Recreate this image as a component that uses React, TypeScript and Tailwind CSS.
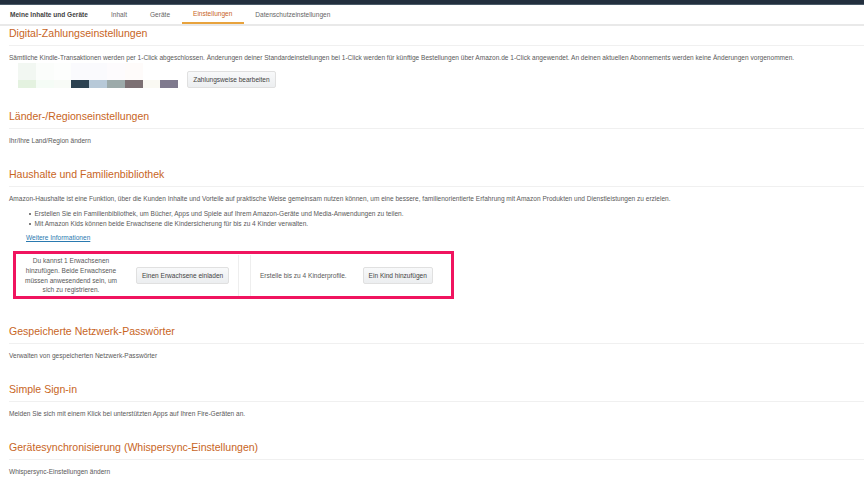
const font = { fontFamily: '"Liberation Sans", Arial, sans-serif' };

const tabs = ['Inhalt', 'Geräte', 'Einstellungen', 'Datenschutzeinstellungen'];

const swatches = [
  ['#f2f7f2', '#e4f2e0'],
  ['#fbfdfb', '#f5fcf6'],
  ['#fdfefd', '#f8fbf7'],
  ['#fafafd', '#2c4251'],
  ['#fafafd', '#b7c9d8'],
  ['#fdfbfd', '#9caaaa'],
  ['#fefbfa', '#7c7073'],
  ['#ffffff', '#faf9f3'],
  ['#ffffff', '#7f7a8e'],
];

function Section({ title, children }: { title: string; children?: React.ReactNode }) {
  return (
    <section>
      <h2 className="text-[10.55px] leading-[14px] text-[#c8651e] border-b border-[#f0f0f0] pb-[5px]">{title}</h2>
      {children}
    </section>
  );
}

function Btn({ children }: { children: React.ReactNode }) {
  return (
    <button className="h-[17px] px-[5px] text-[6.55px] text-[#444] rounded-[2px] border border-[#e0e0e0] bg-gradient-to-b from-[#f8f9fa] to-[#eceef0] whitespace-nowrap">
      {children}
    </button>
  );
}

export default function App() {
  return (
    <div style={font} className="relative w-[864px] h-[486px] overflow-hidden bg-white text-[6.55px] text-[#5a5a5a]">
      <div className="h-[5px] bg-[#232f3e] border-b border-[#4a5a68]" />
      <nav className="h-[19px] flex items-center border-b-2 border-[#e9e9e9] box-content">
        <span className="ml-[10px] w-[89.5px] font-bold text-[#444]">Meine Inhalte und Geräte</span>
        <div className="flex h-full">
          {tabs.map((t) => (
            <span
              key={t}
              className={
                t === 'Einstellungen'
                  ? 'flex items-center px-[11.5px] border-b-2 border-[#e8a33d] text-[#c8651e] h-[19px]'
                  : 'flex items-center px-[11.5px] h-[19px] text-[#666]'
              }
            >
              {t}
            </span>
          ))}
        </div>
      </nav>

      <main className="pl-[9px]">
        <Section title="Digital-Zahlungseinstellungen">
          <p className="mt-[7px] leading-[9px]">
            Sämtliche Kindle-Transaktionen werden per 1-Click abgeschlossen. Änderungen deiner Standardeinstellungen bei 1-Click werden für künftige Bestellungen über Amazon.de 1-Click angewendet. An deinen aktuellen Abonnements werden keine Änderungen vorgenommen.
          </p>
          <div className="mt-[1px] ml-[9px] flex items-end gap-[9px] h-[25px]">
            <div className="flex">
              {swatches.map((s, i) => (
                <div key={i} className="w-[17.8px]">
                  <div className="h-[17px]" style={{ background: s[0] }} />
                  <div className="h-[8px]" style={{ background: s[1] }} />
                </div>
              ))}
            </div>
            <Btn>Zahlungsweise bearbeiten</Btn>
          </div>
        </Section>

        <div className="mt-[21px]">
          <Section title="Länder-/Regionseinstellungen">
            <p className="mt-[7px] leading-[9px]">Ihr/Ihre Land/Region ändern</p>
          </Section>
        </div>

        <div className="mt-[22px]">
          <Section title="Haushalte und Familienbibliothek">
            <p className="mt-[7px] leading-[9px]">
              Amazon-Haushalte ist eine Funktion, über die Kunden Inhalte und Vorteile auf praktische Weise gemeinsam nutzen können, um eine bessere, familienorientierte Erfahrung mit Amazon Produkten und Dienstleistungen zu erzielen.
            </p>
            <ul className="mt-[6px] ml-[20px] leading-[10px]">
              <li className="flex items-center gap-[4px]">
                <span className="w-[1.5px] h-[1.5px] rounded-full bg-[#555]" />
                Erstellen Sie ein Familienbibliothek, um Bücher, Apps und Spiele auf Ihrem Amazon-Geräte und Media-Anwendungen zu teilen.
              </li>
              <li className="flex items-center gap-[4px]">
                <span className="w-[1.5px] h-[1.5px] rounded-full bg-[#555]" />
                Mit Amazon Kids können beide Erwachsene die Kindersicherung für bis zu 4 Kinder verwalten.
              </li>
            </ul>
            <a className="block mt-[4px] ml-[17px] underline text-[#2a7ab0] leading-[9px]">Weitere Informationen</a>
            <div className="mt-[13px] ml-[6px] flex h-[41px] w-[428px]">
              <div className="w-[224px] flex items-center border-r border-[#eeeeee]">
                <p className="w-[96px] ml-[8px] text-center leading-[9.6px] shrink-0">
                  Du kannst 1 Erwachsenen hinzufügen. Beide Erwachsene müssen anwesendend sein, um sich zu registrieren.
                </p>
                <div className="ml-[17px]"><Btn>Einen Erwachsene einladen</Btn></div>
              </div>
              <div className="ml-[11px] flex items-center border-l border-[#eeeeee] pl-[9px]">
                <span>Erstelle bis zu 4 Kinderprofile.</span>
                <div className="ml-[16px]"><Btn>Ein Kind hinzufügen</Btn></div>
              </div>
            </div>
          </Section>
        </div>

        <div className="mt-[28px]">
          <Section title="Gespeicherte Netzwerk-Passwörter">
            <p className="mt-[7px] leading-[9px]">Verwalten von gespeicherten Netzwerk-Passwörter</p>
          </Section>
        </div>
        <div className="mt-[22px]">
          <Section title="Simple Sign-in">
            <p className="mt-[7px] leading-[9px]">Melden Sie sich mit einem Klick bei unterstützten Apps auf Ihren Fire-Geräten an.</p>
          </Section>
        </div>
        <div className="mt-[22px]">
          <Section title="Gerätesynchronisierung (Whispersync-Einstellungen)">
            <p className="mt-[7px] leading-[9px]">Whispersync-Einstellungen ändern</p>
          </Section>
        </div>
      </main>

      {/* annotation frame on top of the page */}
      <div className="absolute left-[13px] top-[251px] w-[441px] h-[48px] border-[3px] border-[#f0145f] pointer-events-none" />
    </div>
  );
}
